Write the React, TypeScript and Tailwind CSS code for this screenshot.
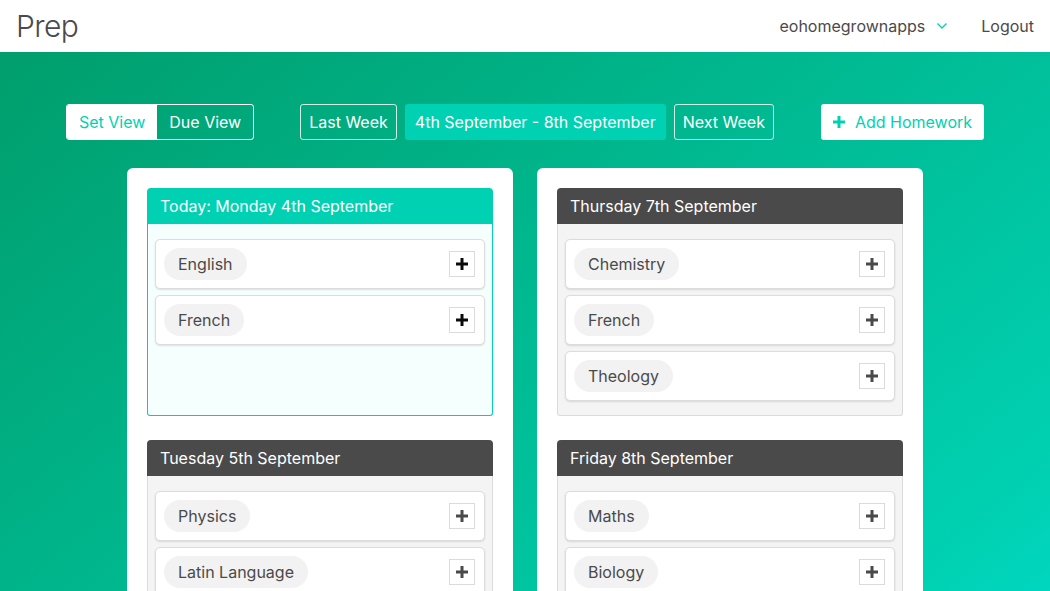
import React from "react";

const font = { fontFamily: "Inter, 'Noto Sans', 'Liberation Sans', sans-serif" };

function PlusIcon({ color }: { color: string }) {
  return (
    <svg width="12" height="12" viewBox="0 0 12 12">
      <rect x="4.5" y="0" width="3" height="12" fill={color} />
      <rect x="0" y="4.5" width="12" height="3" fill={color} />
    </svg>
  );
}

function Item({ name, today }: { name: string; today?: boolean }) {
  return (
    <div className="flex items-center justify-between rounded-[5px] border border-[#dcdcdc] bg-white p-2 pr-[9px] shadow-[0_1px_2px_rgba(10,10,10,0.12)]">
      <span className="flex h-8 items-center rounded-full bg-[#f2f2f2] px-[14px] text-[16px] text-[#4a4a4a]">{name}</span>
      <span className="flex h-[26px] w-[26px] items-center justify-center border border-[#dbdbdb] bg-white">
        <PlusIcon color={today ? "#0a0a0a" : "#4a4a4a"} />
      </span>
    </div>
  );
}

function Panel({ title, items, today }: { title: string; items: string[]; today?: boolean }) {
  return (
    <div className="flex flex-col">
      <div
        className={`flex h-9 items-center rounded-t-[4px] px-[13px] text-[16px] text-white ${
          today ? "bg-[#00d1b2]" : "bg-[#4a4a4a]"
        }`}
      >
        {title}
      </div>
      <div
        className={`flex min-h-[192px] flex-col gap-[6px] rounded-b-[3px] border border-t-0 px-[7px] pb-[14px] pt-[15px] ${
          today ? "border-[#00d1b2] bg-[#f5fffd]" : "border-[#dbdbdb] bg-[#f4f4f4]"
        }`}
      >
        {items.map((i) => (
          <Item key={i} name={i} today={today} />
        ))}
      </div>
    </div>
  );
}

export default function App() {
  return (
    <div className="min-h-screen" style={font}>
      <nav className="flex h-[52px] items-center justify-between bg-white pl-4 pr-4">
        <span className="text-[30px] font-light tracking-[-0.6px] text-[#4a4a4a]">Prep</span>
        <div className="flex items-center text-[16px] text-[#4a4a4a]">
          <span>eohomegrownapps</span>
          <svg className="ml-[11px]" width="12" height="8" viewBox="0 0 12 8">
            <path d="M1.5 1.5 L6 6 L10.5 1.5" fill="none" stroke="#00d1b2" strokeWidth="1.4" />
          </svg>
          <span className="ml-[33px]">Logout</span>
        </div>
      </nav>
      <main className="min-h-[539px] bg-[linear-gradient(141deg,#009e6c_0%,#00d1b2_71%,#00e7eb_100%)] pt-[52px] pb-12">
        <div className="flex items-center justify-center text-[16px]">
          <div className="flex h-9 overflow-hidden rounded-[3px] border border-white">
            <span className="flex items-center bg-white px-3 text-[#00d1b2]">Set View</span>
            <span className="flex items-center px-3 text-white">Due View</span>
          </div>
          <span className="ml-[46px] flex h-9 items-center rounded-[3px] border border-white/80 px-[8px] text-white">Last Week</span>
          <span className="ml-2 flex h-9 items-center rounded-[3px] bg-[#00d1b2] px-[10px] text-white">4th September - 8th September</span>
          <span className="ml-2 flex h-9 items-center rounded-[3px] border border-white/80 px-[8px] text-white">Next Week</span>
          <span className="ml-[47px] flex h-9 items-center gap-[10px] rounded-[3px] bg-white px-[12px] text-[#00d1b2]">
            <PlusIcon color="#00d1b2" />
            Add Homework
          </span>
        </div>
        <div className="mt-7 flex items-start justify-center gap-6">
          <div className="flex w-[386px] flex-col gap-6 rounded-[6px] bg-white p-5">
            <Panel title="Today: Monday 4th September" items={["English", "French"]} today />
            <Panel title="Tuesday 5th September" items={["Physics", "Latin Language", "Mathematics"]} />
            <Panel title="Wednesday 6th September" items={["English", "History", "Geography"]} />
          </div>
          <div className="flex w-[386px] flex-col gap-6 rounded-[6px] bg-white p-5">
            <Panel title="Thursday 7th September" items={["Chemistry", "French", "Theology"]} />
            <Panel title="Friday 8th September" items={["Maths", "Biology", "English"]} />
          </div>
        </div>
      </main>
    </div>
  );
}
